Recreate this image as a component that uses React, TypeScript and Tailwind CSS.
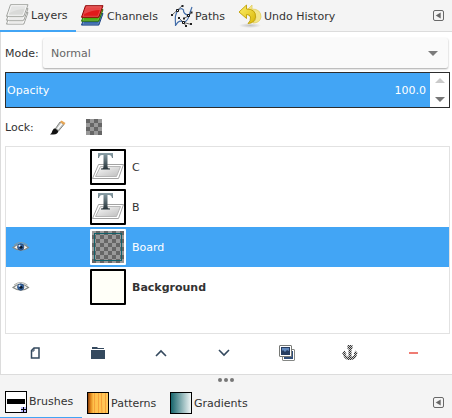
import type { ReactNode } from 'react';

function LayersIcon({ colors }: { colors: 'gray' | 'rgb' }) {
  const gray = colors === 'gray';
  const fills = gray ? ['#e4e4e2', '#e8e8e6', '#d9dad8'] : ['#3566ac', '#4ba80e', '#e01a1a'];
  const strokes = gray ? ['#a0a29e', '#a0a29e', '#a3a5a1'] : ['#1f4788', '#2e7307', '#8f0808'];
  return (
    <svg width="24" height="24" viewBox="0 0 24 24">
      {[0, 1, 2].map((i) => {
        const y = 7.7 - i * 3.9;
        return (
          <g key={i}>
            <path d={`M5.500 ${y + 1.8}H23L18.800 ${y + 13.4}H1.500Z`} fill={fills[i]} stroke={strokes[i]} strokeWidth="1" strokeLinejoin="round" />
            <path d={`M6.300 ${y + 2.8}H21.500L18 ${y + 12.4}H3Z`} fill="none" stroke="#fff" strokeOpacity={gray ? 0.8 : 0.22} />
          </g>
        );
      })}
      <path d="M6.500 2.500H21.500L20 6Q12 6 4.500 10Z" fill="#fff" opacity={gray ? 0.3 : 0.2} />
    </svg>
  );
}

function PathsIcon() {
  return (
    <svg width="24" height="24" viewBox="0 0 24 24">
      <path d="M4.500 22C5 17 2.500 13 6.500 7Q10 3 12.500 6Q12 10 18 11.500M5 21Q8 15 12.500 18.500Q17 17 18 11.500L21 3" fill="none" stroke="#426da9" strokeWidth="1.200" />
      <path d="M1 11L11.500 1.500M8 14L12.500 18.500L20.500 20.500M15 22L12.500 18.500M13 14.500L18 11.500L20.500 8.500" fill="none" stroke="#444" strokeWidth=".8" />
      <path d="M5.500 5.500h2v2h-2zM11.500 17.500h2v2h-2zM16.500 10.500h2v2h-2z" fill="#f3f3f3" stroke="#111" />
      <path d="M0 10h2v2H0zM10.500 1h2v2h-2zM7 13h2v2H7zM19 19h2v2h-2zM19.500 7.500h2v2h-2zM14 21h2v2h-2zM12 13.500h2v2h-2z" fill="#222" />
    </svg>
  );
}

function UndoIcon() {
  return (
    <svg width="24" height="24" viewBox="0 0 24 24">
      <defs>
        <linearGradient id="undo" x2="1" y2="1">
          <stop stopColor="#fff06b" />
          <stop offset="1" stopColor="#d9b806" />
        </linearGradient>
        <radialGradient id="undoShade">
          <stop stopColor="#777" stopOpacity=".4" />
          <stop offset="1" stopColor="#777" stopOpacity="0" />
        </radialGradient>
      </defs>
      <ellipse cx="12" cy="21.500" rx="11" ry="2.500" fill="url(#undoShade)" />
      <path d="M7 8L14 1V5Q23 5 23 13Q22 19 15 19Q18 17 18 13Q18 10 14 10V14Z" fill="#f3e588" stroke="#e3cf60" strokeWidth=".8" />
      <path d="M1 8L8.500 1V5Q18 5 17.500 13Q17 19 10 19.500Q13 17 12.500 13Q12 10.500 8.500 10.500V14.500Z" fill="url(#undo)" stroke="#c09e03" strokeWidth=".9" strokeLinejoin="round" />
    </svg>
  );
}

function MenuButton() {
  return (
    <svg width="11" height="11" viewBox="0 0 11 11">
      <rect x=".5" y=".5" width="10" height="10" rx="1.500" fill="none" stroke="#686868" />
      <path d="M7.700 2.600V8.400L2.700 5.500Z" fill="#686868" />
    </svg>
  );
}

function BrushIcon() {
  return (
    <svg width="16" height="16" viewBox="0 0 16 16">
      <path d="M0 15.500Q2 14 2.500 11.500Q4 8.500 6.500 9.500L8.500 11.500Q8 15.500 3.500 15.500Z" fill="#111" />
      <path d="M5.500 9.500L10 3L14 5.500L8.500 12Z" fill="#c6c8c5" stroke="#6b6d6a" strokeWidth=".8" />
      <path d="M7.500 10L12 4.500" stroke="#fff" strokeWidth="1.200" />
      <path d="M10 3L11.500 1.500L15.500 4L14 6Z" fill="#e7a655" />
    </svg>
  );
}

function LockAlphaIcon() {
  return (
    <svg width="16" height="16" viewBox="0 0 16 16" shapeRendering="crispEdges">
      <defs>
        <pattern id="alpha" width="8" height="8" patternUnits="userSpaceOnUse">
          <rect width="8" height="8" fill="#999" />
          <path d="M0 0h4v4H0zM4 4h4v4H4z" fill="#666" />
        </pattern>
      </defs>
      <rect width="16" height="16" fill="url(#alpha)" />
    </svg>
  );
}

function BoardThumb() {
  return (
    <svg width="32" height="32" viewBox="0 0 32 32" shapeRendering="crispEdges">
      <defs>
        <pattern id="board" width="8" height="8" patternUnits="userSpaceOnUse">
          <rect width="8" height="8" fill="#999" />
          <path d="M4 0h4v4H4zM0 4h4v4H0z" fill="#666" />
        </pattern>
      </defs>
      <rect width="32" height="32" fill="url(#board)" />
      <path d="M2 2H30V30H2ZM3 3V29H29V3Z" fill="#12616a" fillRule="evenodd" />
    </svg>
  );
}

function TextThumb() {
  return (
    <svg width="32" height="32" viewBox="0 0 32 32">
      <defs>
        <linearGradient id="tee" x2="0" y2="1">
          <stop stopColor="#8ba0a8" />
          <stop offset="1" stopColor="#263238" />
        </linearGradient>
        <linearGradient id="sheet" x2="1" y2="1">
          <stop stopColor="#fafafa" />
          <stop offset="1" stopColor="#bdbdbd" />
        </linearGradient>
      </defs>
      <path d="M6.500 13.500H31.500L26.500 27.500H.5Z" fill="#fff" stroke="#a3a3a3" />
      <path d="M8.500 15.500H28.500L24.500 25.500H3.500Z" fill="url(#sheet)" stroke="#b7b7b7" />
      <path d="M6 2H21V7H20Q19.500 4 17 4H15.500V16Q15.500 17.500 18 17.500V18.500H9V17.500Q11.500 17.500 11.500 16V4H10Q7.500 4 7 7H6Z" fill="url(#tee)" />
    </svg>
  );
}

function EyeIcon() {
  return (
    <svg width="18" height="12" viewBox="0 0 18 12">
      <path d="M1 6.500Q8.500 0 16.500 6.500Q9 12 1 6.500Z" fill="#f5f5f3" stroke="#858984" strokeWidth="1.200" />
      <path d="M2 4Q8.500-1 15.500 4" fill="none" stroke="#92958f" strokeWidth=".8" />
      <circle cx="8.700" cy="6" r="3.200" fill="#3465a4" stroke="#24446f" strokeWidth=".7" />
      <circle cx="9" cy="6.300" r="1.500" fill="#071525" />
      <circle cx="7.500" cy="4.800" r="1" fill="#e6f0ff" />
    </svg>
  );
}

function Tab({ icon, label, active, className }: { icon: ReactNode; label: string; active?: boolean; className: string }) {
  return (
    <div className={`flex shrink-0 items-center ${active ? 'border-b-2 border-[#42a5f5]' : ''} ${className}`}>
      {icon}
      <span className="pt-0.5">{label}</span>
    </div>
  );
}

function Layer({ name, thumb, visible, selected, bold }: { name: string; thumb: ReactNode; visible?: boolean; selected?: boolean; bold?: boolean }) {
  return (
    <div className={`flex h-10 items-center ${selected ? 'bg-[#42a5f5] text-white' : ''}`}>
      <div className="flex w-[84px] pl-1.5">{visible && <EyeIcon />}</div>
      <div className={`flex size-9 items-center justify-center rounded-[1px] border-2 ${selected ? 'border-white' : 'border-black bg-white'}`}>{thumb}</div>
      <span className={`ml-1.5 pt-0.5 ${bold ? 'font-bold' : ''}`}>{name}</span>
    </div>
  );
}

function Actions() {
  return (
    <div className="flex h-[38px] items-center justify-between pr-[31px] pl-[26px]">
      <svg width="16" height="16" viewBox="0 0 16 16">
        <path d="M7 3H12V13H4.500V5.500Z" fill="none" stroke="#34495e" strokeWidth="1.500" />
        <path d="M4.500 6H7V3" fill="none" stroke="#34495e" />
      </svg>
      <svg width="16" height="16" viewBox="0 0 16 16">
        <path d="M2 2H7L8 3H14V4H2ZM1 5H15V14H1Z" fill="#34495e" />
      </svg>
      <svg width="16" height="16" viewBox="0 0 16 16">
        <path d="M3 11L8 6L13 11" fill="none" stroke="#34495e" strokeWidth="1.600" />
      </svg>
      <svg width="16" height="16" viewBox="0 0 16 16">
        <path d="M3 5L8 10L13 5" fill="none" stroke="#34495e" strokeWidth="1.600" />
      </svg>
      <svg width="16" height="16" viewBox="0 0 16 16">
        <rect x="3.500" y="4.500" width="12" height="11" rx=".5" fill="#fff" stroke="#858784" />
        <rect x="5" y="6" width="9" height="8" fill="#304d78" />
        <rect x=".5" y=".5" width="12" height="11" rx=".5" fill="#fff" stroke="#777976" />
        <rect x="2" y="2" width="9" height="8" fill="#253c60" />
        <path d="M3 3H10V6L8 5L6 7L4 5L3 6Z" fill="#6389bd" />
      </svg>
      <svg width="16" height="16" viewBox="0 0 16 16">
        <defs>
          <pattern id="stipple" width="2" height="2" patternUnits="userSpaceOnUse">
            <rect width="2" height="2" fill="#ccc" />
            <path d="M0 0h1v1H0zM1 1h1v1H1z" fill="#333" />
          </pattern>
        </defs>
        <path d="M5.500 0H10.500V4H9.500V12Q12 11.500 12.500 9H11.500L13.500 5.500L16 8.500L15 9Q14.500 14 9.500 15H6.500Q1.500 14 1 9L0 8.500L2.500 5.500L4.500 9H3.500Q4 11.500 6.500 12V4H5.500Z" fill="url(#stipple)" />
      </svg>
      <div className="flex w-4 justify-center"><span className="h-0.5 w-[9px] bg-[#ef7c73]" /></div>
    </div>
  );
}

export default function App() {
  return (
    <div className="flex h-[418px] w-[452px] flex-col overflow-hidden bg-[#f4f4f4] font-['DejaVu_Sans',sans-serif] text-[11px] leading-4 text-[#333]">
      <div className="flex h-8 shrink-0">
        <div className="flex h-8 grow border-b border-[#dcdcdc]">
          <Tab active className="h-8 w-[76px] gap-0.5 pl-[5px]" label="Layers" icon={<LayersIcon colors="gray" />} />
          <Tab className="w-[90px] gap-[3px] pl-1" label="Channels" icon={<LayersIcon colors="rgb" />} />
          <Tab className="w-[70px] pl-[5px]" label="Paths" icon={<PathsIcon />} />
          <Tab className="gap-0.5 pl-0.5" label="Undo History" icon={<UndoIcon />} />
          <div className="ml-auto flex items-center pr-2"><MenuButton /></div>
        </div>
      </div>

      <div className="flex h-[343px] shrink-0 flex-col border-b border-l border-[#dcdcdc] bg-white">
        <div className="flex h-[40px] items-start pt-1.5">
          <span className="w-[42px] pt-2 pl-1">Mode:</span>
          <div className="flex h-[30px] w-[405px] items-center justify-between rounded-[2px] bg-[#fafafa] pl-2 pr-2.5 text-[#666] shadow-[0_1px_2px_rgba(0,0,0,0.35)]">
            <span className="pt-0.5">Normal</span>
            <svg width="10" height="5"><path d="M0 0H10L5 5Z" fill="#7b7b7b" /></svg>
          </div>
        </div>

        <div className="ml-1 flex h-9 w-[445px] shrink-0 border border-[#2d2d2d]">
          <div className="flex grow items-center justify-between bg-[#42a5f5] pt-0.5 pr-1 pl-px text-white">
            <span>Opacity</span>
            <span>100.0</span>
          </div>
          <div className="flex w-[19px] flex-col items-center justify-between pt-[5px] pb-[5px]">
            <svg width="10" height="5"><path d="M0 5H10L5 0Z" fill="#cacaca" /></svg>
            <svg width="10" height="5"><path d="M0 0H10L5 5Z" fill="#777" /></svg>
          </div>
        </div>

        <div className="flex h-[38px] shrink-0 items-center pl-1">
          <span className="w-[45px] pt-0.5">Lock:</span>
          <BrushIcon />
          <div className="ml-5"><LockAlphaIcon /></div>
        </div>

        <div className="ml-1 h-[188px] w-[445px] shrink-0 border border-[#e2e2e2]">
          <Layer name="C" thumb={<TextThumb />} />
          <Layer name="B" thumb={<TextThumb />} />
          <Layer name="Board" visible selected thumb={<BoardThumb />} />
          <Layer name="Background" visible bold thumb={<div className="size-8 bg-[#fffff8]" />} />
        </div>
        <Actions />
      </div>

      <div className="flex h-2 shrink-0 items-center justify-center gap-[2px] pt-px pr-px">
        <i className="size-1 rounded-full bg-[#777]" />
        <i className="size-1 rounded-full bg-[#777]" />
        <i className="size-1 rounded-full bg-[#777]" />
      </div>

      <div className="flex h-[35px] shrink-0">
        <div className="flex h-[35px] w-[82px] items-center gap-0.5 border-b border-[#42a5f5] pt-[5px] pl-[5px] pb-0.5">
          <svg width="22" height="22" viewBox="0 0 22 22" shapeRendering="crispEdges">
            <rect x=".5" y=".5" width="21" height="21" fill="#fff" stroke="#000" />
            <path d="M2 8h18v5H2z" fill="#000" />
            <path d="M16 16h5v5h-5z" fill="#bcbcff" />
            <path d="M18 16h1v5h-1zM16 18h5v1h-5z" fill="#000" />
          </svg>
          <span>Brushes</span>
        </div>
        <Tab className="w-[83px] gap-0.5 pl-[5px] pt-[5px]" label="Patterns" icon={
          <svg width="22" height="22" viewBox="0 0 22 22">
            <defs><linearGradient id="wood"><stop stopColor="#7e3103" /><stop offset=".15" stopColor="#df861d" /><stop offset=".28" stopColor="#ffc14a" /><stop offset="1" stopColor="#ffc85b" /></linearGradient></defs>
            <rect x=".5" y=".5" width="21" height="21" fill="url(#wood)" stroke="#000" />
            <path d="M7.500 1V21M11.500 1V21M14.500 1V12L15 21M18.500 1V21" stroke="#f6a13a" fill="none" />
          </svg>
        } />
        <Tab className="gap-0.5 pl-[5px] pt-[5px]" label="Gradients" icon={
          <svg width="22" height="22" viewBox="0 0 22 22">
            <defs><linearGradient id="fade"><stop stopColor="#126269" /><stop offset="1" stopColor="#f4f8f8" /></linearGradient></defs>
            <rect x=".5" y=".5" width="21" height="21" fill="url(#fade)" stroke="#000" />
          </svg>
        } />
        <div className="ml-auto flex items-center pt-1 pr-2"><MenuButton /></div>
      </div>
    </div>
  );
}
